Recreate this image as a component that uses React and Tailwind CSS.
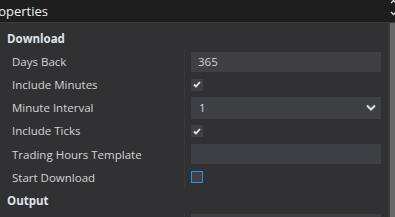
import React from "react";

const font = { fontFamily: '"Open Sans", "Noto Sans", sans-serif' };

function Check() {
  return (
    <div className="w-[12px] h-[12px] bg-[#3f3f46] flex items-center justify-center">
      <svg width="8" height="7" viewBox="0 0 8 7">
        <path d="M1 3.5 L3 5.5 L7 1" stroke="#e8e8e8" strokeWidth="1.8" fill="none" />
      </svg>
    </div>
  );
}

function Row({ label, children }) {
  return (
    <div className="flex h-[23.14px] shrink-0 items-stretch">
      <div className="w-[184px] pl-[12px] flex items-center text-[11.5px] text-[#d4d4d4] whitespace-nowrap">
        {label}
      </div>
      <div className="w-[1px] bg-[#3a3a3e]" />
      <div className="flex-1 pl-[6px] pr-[7px] flex items-center">{children}</div>
    </div>
  );
}

function Section({ title }) {
  return (
    <div className="h-[23.14px] shrink-0 flex items-center pl-[7px] text-[11.5px] font-bold text-[#dfe3ea]">
      {title}
    </div>
  );
}

export default function App() {
  return (
    <div className="w-[395px] h-[217px] overflow-hidden bg-[#313134] flex flex-col" style={font}>
      <div className="relative h-[23px] shrink-0 bg-[#1e1e1e] border-b border-[#3c3c40] flex items-center">
        <span className="-ml-[15px] text-[13px] text-[#f0f0f0] leading-none">Properties</span>
        <svg className="absolute right-0 top-0" width="5" height="16" viewBox="0 0 5 16">
          <path d="M1 3 L3.5 0.5 L6 3" stroke="#e0e0e0" strokeWidth="1.3" fill="none" />
          <path d="M1 12 L3.5 14.5 L6 12" stroke="#e0e0e0" strokeWidth="1.3" fill="none" />
        </svg>
      </div>
      <div className="flex flex-1 min-h-0">
        <div className="flex-1 pt-[4px] flex flex-col">
          <Section title="Download" />
          <Row label="Days Back">
            <div className="h-[20px] w-full bg-[#3f3f46] flex items-center pl-[7px] text-[11.5px] text-[#d4d4d4]">365</div>
          </Row>
          <Row label="Include Minutes">
            <Check />
          </Row>
          <Row label="Minute Interval">
            <div className="h-[22px] w-full bg-[#3f3f46] flex items-center justify-between pl-[8px] pr-[5px] text-[11.5px] text-[#d4d4d4]">
              <span>1</span>
              <svg width="10" height="8" viewBox="0 0 10 8">
                <path d="M1 1.5 L5 5.5 L9 1.5" stroke="#e0e0e0" strokeWidth="2" fill="none" />
              </svg>
            </div>
          </Row>
          <Row label="Include Ticks">
            <Check />
          </Row>
          <Row label="Trading Hours Template">
            <div className="h-[20px] w-full bg-[#3f3f46]" />
          </Row>
          <Row label="Start Download">
            <div className="w-[12px] h-[12px] bg-[#3f3f46] border border-[#1c97ea]" />
          </Row>
          <Section title="Output" />
          <Row label="">
            <div className="h-[20px] w-full bg-[#3f3f46]" />
          </Row>
        </div>
        <div className="w-[7px] flex shrink-0">
          <div className="w-[2px] bg-[#3a3a3e]" />
          <div className="flex-1 bg-[#686868]" />
        </div>
      </div>
    </div>
  );
}
